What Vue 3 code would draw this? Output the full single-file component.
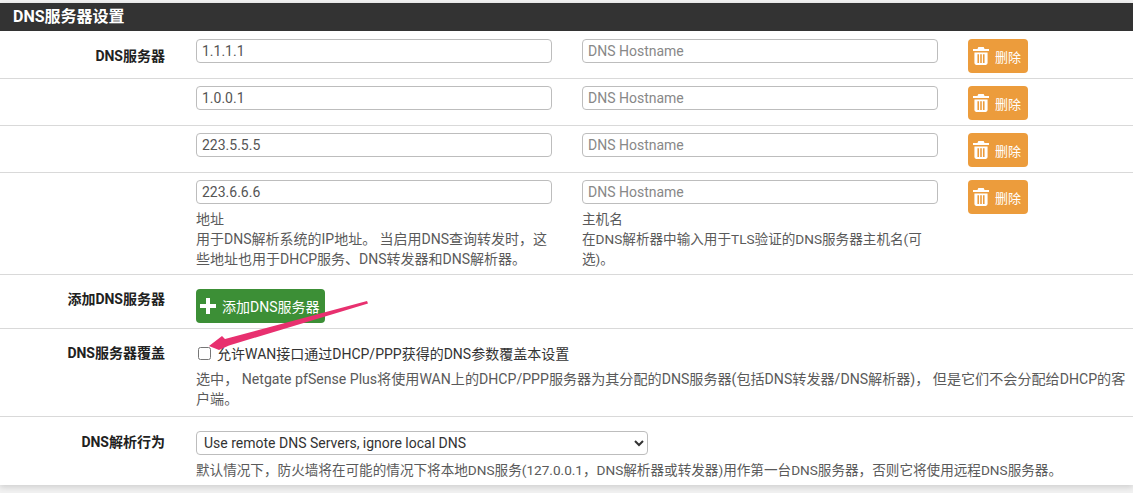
<template>
  <div class="page">
    <div class="panel">
      <h2 class="heading">DNS服务器设置</h2>

      <div v-for="(server, i) in servers" :key="server" class="row" :class="{ first: i === 0, last: i === servers.length - 1 }">
        <div class="label">{{ i === 0 ? 'DNS服务器' : '' }}</div>
        <div class="field">
          <input class="input" type="text" :value="server" />
          <div v-if="i === servers.length - 1" class="help">
            地址<br />用于DNS解析系统的IP地址。 当启用DNS查询转发时，这些地址也用于DHCP服务、DNS转发器和DNS解析器。
          </div>
        </div>
        <div class="field">
          <input class="input" type="text" placeholder="DNS Hostname" />
          <div v-if="i === servers.length - 1" class="help tight">
            主机名<br />在DNS解析器中输入用于TLS验证的DNS服务器主机名(可选)。
          </div>
        </div>
        <div>
          <button class="btn orange">
            <svg class="trash" viewBox="0 0 18 20" width="16" height="18">
              <path fill="#fff" d="M6 0h6l1 2h5v2.4H0V2h5zM1.6 6h14.8v12a2 2 0 0 1-2 2H3.600a2 2 0 0 1-2-2zM5 8v10h1.800V8zm3.100 0v10h1.800V8zM11.200 8v10H13V8z" />
            </svg>
            删除
          </button>
        </div>
      </div>

      <div class="row add">
        <div class="label">添加DNS服务器</div>
        <div class="wide">
          <button class="btn green">
            <svg viewBox="0 0 16 16" width="16" height="16">
              <path fill="#fff" d="M6 0h4v6h6v4h-6v6H6v-6H0V6h6z" />
            </svg>
            添加DNS服务器
          </button>
        </div>
      </div>

      <div class="row override">
        <div class="label">DNS服务器覆盖</div>
        <div class="wide">
          <label class="check">
            <input type="checkbox" />
            <span>允许WAN接口通过DHCP/PPP获得的DNS参数覆盖本设置</span>
          </label>
          <div class="help wider">
            选中， Netgate pfSense Plus将使用WAN上的DHCP/PPP服务器为其分配的DNS服务器(包括DNS转发器/DNS解析器)， 但是它们不会分配给DHCP的客户端。
          </div>
        </div>
      </div>

      <div class="row behavior">
        <div class="label">DNS解析行为</div>
        <div class="wide">
          <select class="select">
            <option>Use remote DNS Servers, ignore local DNS</option>
          </select>
          <div class="help tight">
            默认情况下，防火墙将在可能的情况下将本地DNS服务(127.0.0.1，DNS解析器或转发器)用作第一台DNS服务器，否则它将使用远程DNS服务器。
          </div>
        </div>
      </div>
    </div>

    <svg class="arrow" viewBox="0 0 1133 493" width="1133" height="493">
      <path fill="#e8306f" d="M367 301 L368 303.500 L229 345.500 L219 350 L209 346 L222 336 L225 339z" />
    </svg>
  </div>
</template>

<script setup>
const servers = ['1.1.1.1', '1.0.0.1', '223.5.5.5', '223.6.6.6']
</script>

<style>
html, body {
  margin: 0;
  background: #f1f1f1;
}
</style>

<style scoped>
.page {
  position: relative;
  width: 1133px;
  height: 493px;
  overflow: hidden;
  padding-top: 3px;
  box-sizing: border-box;
  font-family: Roboto, "Noto Sans CJK SC", sans-serif;
  font-size: 14px;
  color: #212121;
}
.panel {
  background: #fff;
  box-shadow: 0 2px 6px rgba(0, 0, 0, 0.15);
}
.heading {
  margin: 0;
  height: 28px;
  line-height: 27px;
  padding-left: 13px;
  background: #333;
  color: #fff;
  font-size: 16px;
  font-weight: 700;
}
.row {
  display: grid;
  grid-template-columns: 166px 356px 356px 1fr;
  column-gap: 30px;
  height: 47px;
  box-sizing: border-box;
  padding-top: 7px;
  border-bottom: 1px solid #d9d9d9;
}
.row.first {
  height: 48px;
  padding-top: 8px;
}
.row.last {
  height: 102px;
}
.row.add {
  height: 54px;
  padding-top: 14px;
}
.row.override {
  height: 88px;
  padding-top: 14px;
}
.row.behavior {
  height: 68px;
  padding-top: 14px;
  border-bottom: none;
}
.label {
  text-align: right;
  font-weight: 700;
  line-height: 20px;
  padding: 7px 1px 0 0;
}
.add .label,
.override .label {
  padding-top: 0;
}
.behavior .label {
  padding-top: 1px;
}
.wide {
  grid-column: 2 / 5;
}
.input {
  display: block;
  width: 100%;
  height: 24px;
  box-sizing: border-box;
  padding: 0 5px;
  border: 1px solid #bdbdbd;
  border-radius: 4px;
  font: 14px Roboto, sans-serif;
  color: #555;
  background: #fff;
  outline: none;
}
.input::placeholder {
  color: #888;
}
.help {
  margin-top: 5px;
  line-height: 20px;
  color: #5a5a5a;
  font-size: 14px;
}
.help.tight {
  font-size: 13.600px;
}
.help.wider {
  margin-top: 6px;
  font-size: 14.100px;
}
.btn {
  display: inline-flex;
  align-items: center;
  height: 34px;
  box-sizing: border-box;
  border: none;
  border-radius: 4px;
  color: #fff;
  font: 13px Roboto, "Noto Sans CJK SC", sans-serif;
  white-space: nowrap;
}
.orange {
  width: 60px;
  padding: 0 0 0 5px;
  gap: 6px;
  background: #ec9c3c;
}
.green {
  padding: 0 5px 0 4px;
  gap: 6px;
  font-size: 14px;
  background: #3c8f36;
}
.check {
  display: flex;
  align-items: center;
  height: 20px;
  color: #333;
}
.check input {
  width: 13px;
  height: 13px;
  margin: 1px 6px 0 2px;
}
.select {
  display: block;
  width: 452px;
  height: 24px;
  padding: 0 3px;
  border: 1px solid #bdbdbd;
  border-radius: 4px;
  background: #fff;
  font: 14px Roboto, sans-serif;
  color: #333;
}
.arrow {
  position: absolute;
  left: 0;
  top: 0;
  pointer-events: none;
}
</style>
